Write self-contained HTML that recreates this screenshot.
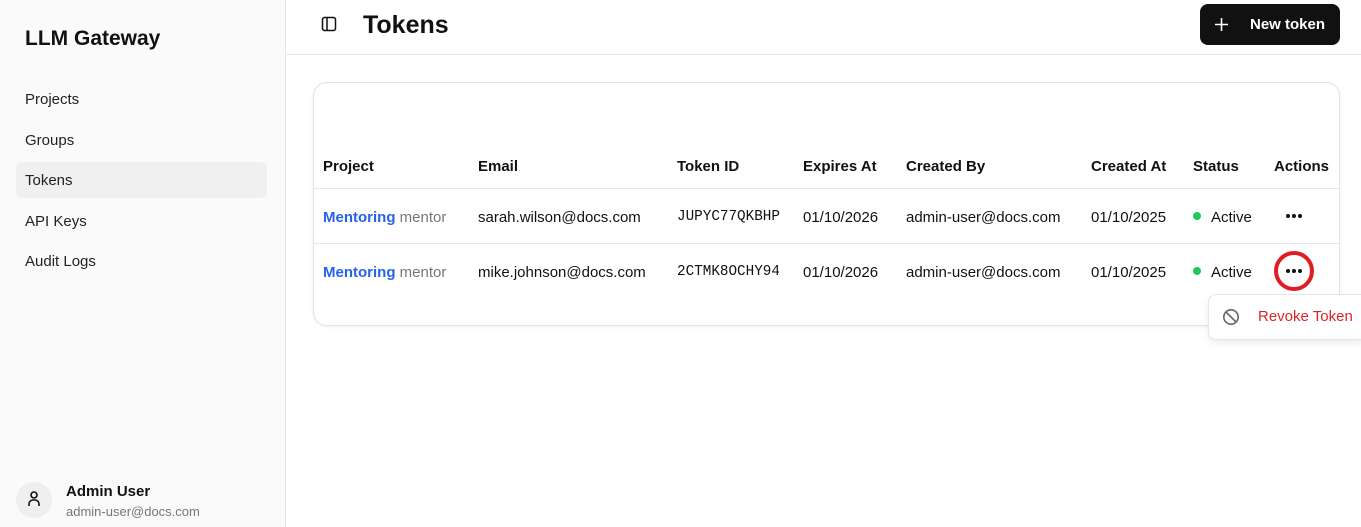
<!DOCTYPE html>
<html><head><meta charset="utf-8"><style>
*{box-sizing:border-box;margin:0;padding:0}
body{width:1361px;height:527px;overflow:hidden;font-family:"Liberation Sans",sans-serif;font-size:15px;color:#111;background:#fff;position:relative}
.a{position:absolute;white-space:nowrap}
.sb{left:0;top:0;width:286px;height:527px;background:#fafafa;border-right:1px solid #e5e5e5}
.nav{left:25px;font-size:15px;color:#222}
.th{top:158px;font-weight:bold;font-size:15px}
.r1{top:209px}.r2{top:264px}
.mono{font-family:"Liberation Mono",monospace;font-size:14.3px}
.dot{width:8px;height:8px;border-radius:50%;background:#22c55e}
</style></head><body>
<div class="a sb"></div>
<div class="a" style="left:25px;top:27px;font-size:21px;font-weight:bold">LLM Gateway</div>
<div class="a nav" style="top:91px">Projects</div>
<div class="a nav" style="top:132px">Groups</div>
<div class="a" style="left:16px;top:162px;width:251px;height:36px;background:#f0f0f0;border-radius:7px"></div>
<div class="a nav" style="top:172px">Tokens</div>
<div class="a nav" style="top:213px">API Keys</div>
<div class="a nav" style="top:253px">Audit Logs</div>
<div class="a" style="left:16px;top:482px;width:36px;height:36px;border-radius:50%;background:#efefef"></div>
<svg class="a" style="left:26px;top:490px" width="16" height="18" viewBox="0 0 16 18" fill="none" stroke="#111" stroke-width="1.6"><circle cx="8" cy="5" r="3"/><path d="M3 16v-2a4 4 0 0 1 4-4h2a4 4 0 0 1 4 4v2"/></svg>
<div class="a" style="left:66px;top:483px;font-weight:bold;font-size:15px">Admin User</div>
<div class="a" style="left:66px;top:504px;font-size:13px;color:#777">admin-user@docs.com</div>

<div class="a" style="left:286px;top:54px;width:1075px;height:1px;background:#e5e5e5"></div>
<svg class="a" style="left:321px;top:16px" width="16" height="16" viewBox="0 0 16 16" fill="none" stroke="#111" stroke-width="1.5"><rect x="1.5" y="1.5" width="13" height="13" rx="2"/><path d="M6 1.5v13"/></svg>
<div class="a" style="left:363px;top:11px;font-size:25px;font-weight:bold">Tokens</div>
<div class="a" style="left:1200px;top:4px;width:140px;height:41px;background:#111;border-radius:8px;color:#fff;font-weight:bold;font-size:15px;line-height:41px;padding-left:50px">New token</div>
<svg class="a" style="left:1214px;top:17px" width="15" height="15" viewBox="0 0 15 15" stroke="#fff" stroke-width="1.6"><path d="M7.5 1v13M1 7.5h13"/></svg>

<div class="a" style="left:313px;top:82px;width:1027px;height:244px;border:1px solid #e2e2e2;border-radius:14px;box-shadow:0 1px 3px rgba(0,0,0,.06)"></div>
<div class="a" style="left:314px;top:188px;width:1025px;height:1px;background:#e8e8e8"></div>
<div class="a" style="left:314px;top:243px;width:1025px;height:1px;background:#e8e8e8"></div>

<div class="a th" style="left:323px">Project</div>
<div class="a th" style="left:478px">Email</div>
<div class="a th" style="left:677px">Token ID</div>
<div class="a th" style="left:803px">Expires At</div>
<div class="a th" style="left:906px">Created By</div>
<div class="a th" style="left:1091px">Created At</div>
<div class="a th" style="left:1193px">Status</div>
<div class="a th" style="left:1274px">Actions</div>

<div class="a r1" style="left:323px"><b style="color:#2563eb">Mentoring</b> <span style="color:#777">mentor</span></div>
<div class="a r1" style="left:478px">sarah.wilson@docs.com</div>
<div class="a r1 mono" style="left:677px;top:209px">JUPYC77QKBHP</div>
<div class="a r1" style="left:803px">01/10/2026</div>
<div class="a r1" style="left:906px">admin-user@docs.com</div>
<div class="a r1" style="left:1091px">01/10/2025</div>
<div class="a dot" style="left:1193px;top:212px"></div>
<div class="a r1" style="left:1211px">Active</div>
<svg class="a" style="left:1285px;top:213px" width="18" height="6" viewBox="0 0 18 6" fill="#111"><circle cx="3" cy="3" r="2"/><circle cx="9" cy="3" r="2"/><circle cx="15" cy="3" r="2"/></svg>

<div class="a r2" style="left:323px"><b style="color:#2563eb">Mentoring</b> <span style="color:#777">mentor</span></div>
<div class="a r2" style="left:478px">mike.johnson@docs.com</div>
<div class="a r2 mono" style="left:677px;top:264px">2CTMK8OCHY94</div>
<div class="a r2" style="left:803px">01/10/2026</div>
<div class="a r2" style="left:906px">admin-user@docs.com</div>
<div class="a r2" style="left:1091px">01/10/2025</div>
<div class="a dot" style="left:1193px;top:267px"></div>
<div class="a r2" style="left:1211px">Active</div>
<svg class="a" style="left:1285px;top:268px" width="18" height="6" viewBox="0 0 18 6" fill="#111"><circle cx="3" cy="3" r="2"/><circle cx="9" cy="3" r="2"/><circle cx="15" cy="3" r="2"/></svg>
<div class="a" style="left:1274px;top:251px;width:40px;height:40px;border:4px solid #e11d24;border-radius:50%"></div>

<div class="a" style="left:1208px;top:294px;width:160px;height:46px;background:#fff;border:1px solid #e5e5e5;border-radius:8px;box-shadow:0 3px 8px rgba(0,0,0,.08)"></div>
<svg class="a" style="left:1222px;top:308px" width="18" height="18" viewBox="0 0 18 18" fill="none" stroke="#666" stroke-width="1.6"><circle cx="9" cy="9" r="7.2"/><path d="M4 4l10 10"/></svg>
<div class="a" style="left:1258px;top:308px;color:#dc2626">Revoke Token</div>
</body></html>
